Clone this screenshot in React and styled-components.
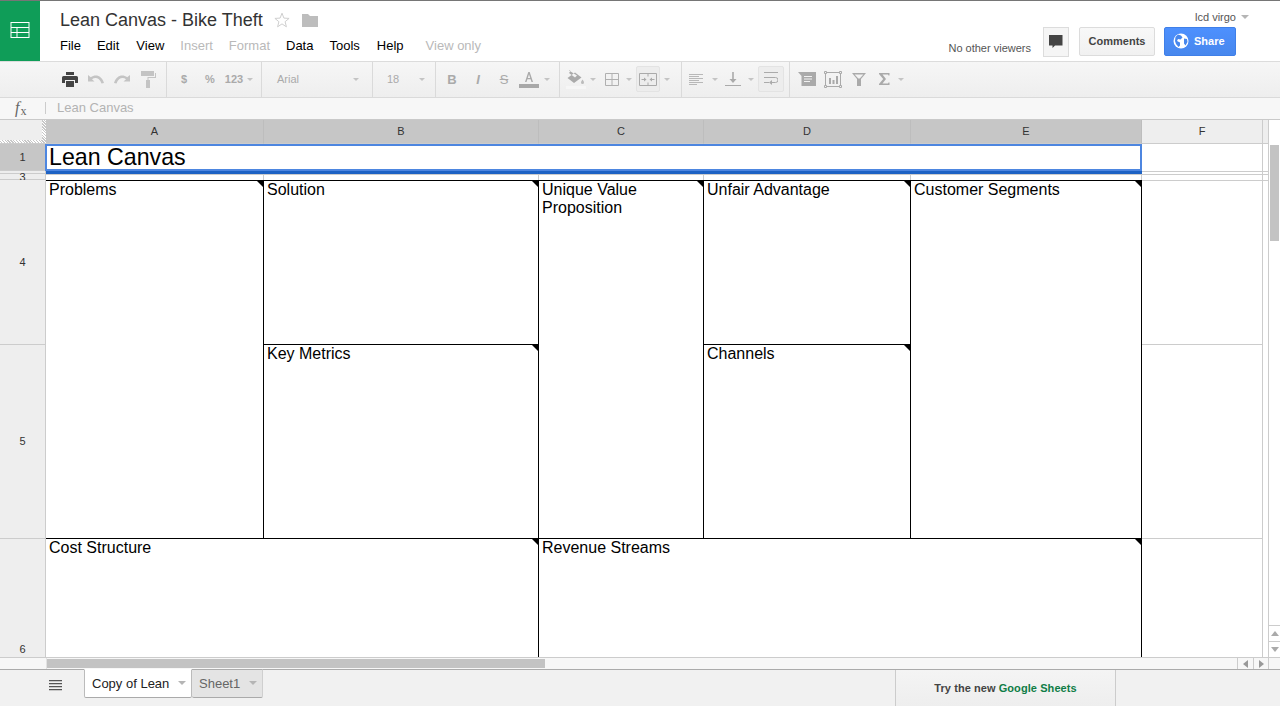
import React from "react";
import styled, { createGlobalStyle } from "styled-components";

const GlobalStyle = createGlobalStyle`
  html, body {
    margin: 0;
    padding: 0;
    height: 100%;
    overflow: hidden;
    background: #fff;
    font-family: "Liberation Sans", Arial, sans-serif;
  }
`;

const Page = styled.div`
  width: 1280px;
  height: 706px;
  display: flex;
  flex-direction: column;
  overflow: hidden;
  border-top: 1px solid #767676;
  box-sizing: border-box;
`;

/* ---------- header ---------- */
const Header = styled.header`
  height: 61px;
  flex: none;
  display: flex;
  border-bottom: 1px solid #dcdcdc;
  box-sizing: border-box;
`;
const LogoBox = styled.div`
  width: 40px;
  height: 60px;
  padding-bottom: 2px;
  box-sizing: border-box;
  background: #0f9d58;
  display: flex;
  align-items: center;
  justify-content: center;
`;
const TitleArea = styled.div`
  flex: 1;
  padding: 8px 0 0 20px;
`;
const TitleRow = styled.div`
  display: flex;
  align-items: center;
  height: 22px;
`;
const Title = styled.div`
  font-size: 18px;
  line-height: 22px;
  color: #333;
  margin-right: 11px;
`;
const FolderWrap = styled.span`
  display: flex;
  margin-left: 12px;
`;
const MenuBar = styled.nav`
  display: flex;
  gap: 16px;
  margin-top: 6px;
  font-size: 13px;
  line-height: 17px;
`;
const MenuItem = styled.span`
  color: ${(p) => (p.$off ? "#b9b9b9" : "#000")};
  margin-left: ${(p) => p.$push || 0}px;
`;
const RightArea = styled.div`
  width: 340px;
  padding: 9px 44px 0 0;
  box-sizing: border-box;
`;
const UserRow = styled.div`
  display: flex;
  align-items: center;
  justify-content: flex-end;
  gap: 5px;
  margin-right: -13px;
  font-size: 11px;
  line-height: 14px;
  color: #555;
`;
const SmallCaret = styled.span`
  width: 0;
  height: 0;
  border-left: ${(p) => p.$size || 4}px solid transparent;
  border-right: ${(p) => p.$size || 4}px solid transparent;
  border-top: ${(p) => p.$size || 4}px solid ${(p) => p.$color || "#b5b5b5"};
  flex: none;
`;
const ActionRow = styled.div`
  display: flex;
  align-items: flex-start;
  justify-content: flex-end;
  margin-top: 3px;
`;
const Viewers = styled.span`
  font-size: 11px;
  color: #555;
  margin: 15px 12px 0 0;
`;
const ChatButton = styled.button`
  width: 26px;
  height: 30px;
  padding: 0;
  margin-right: 10px;
  background: #f5f5f5;
  border: 1px solid #dcdcdc;
  display: flex;
  align-items: center;
  justify-content: center;
`;
const CommentsButton = styled.button`
  width: 76px;
  height: 29px;
  padding: 0 0 2px;
  margin-right: 9px;
  background: linear-gradient(#f8f8f8, #f1f1f1);
  border: 1px solid #dcdcdc;
  border-radius: 2px;
  font: bold 11px "Liberation Sans", Arial, sans-serif;
  color: #444;
`;
const ShareButton = styled.button`
  width: 72px;
  height: 29px;
  padding: 0 0 1px 8px;
  background: linear-gradient(#4d90fe, #4787ed);
  border: 1px solid #3f7fe8;
  border-radius: 2px;
  font: bold 11px "Liberation Sans", Arial, sans-serif;
  color: #fff;
  display: flex;
  align-items: center;
  gap: 5px;
`;

/* ---------- toolbar ---------- */
const Toolbar = styled.div`
  height: 36px;
  flex: none;
  display: flex;
  background: linear-gradient(#f6f6f6, #eeeeee);
  border-bottom: 1px solid #dadada;
  box-sizing: border-box;
`;
const ToolGroup = styled.div`
  width: ${(p) => p.$w}px;
  padding-left: ${(p) => p.$pad || 0}px;
  padding-bottom: 1px;
  flex: none;
  box-sizing: border-box;
  display: flex;
  align-items: center;
  border-right: ${(p) => (p.$last ? "none" : "1px solid #dadada")};
  font-size: 11px;
  color: #aaa;
`;
const Tool = styled.span`
  width: ${(p) => p.$w || 26}px;
  height: ${(p) => (p.$boxed ? 26 : 20)}px;
  margin-left: ${(p) => p.$ml || 0}px;
  flex: none;
  display: flex;
  align-items: center;
  justify-content: center;
  box-sizing: border-box;
  font-size: ${(p) => p.$size || 12}px;
  font-weight: ${(p) => (p.$bold ? "bold" : "normal")};
  font-style: ${(p) => (p.$italic ? "italic" : "normal")};
  background: ${(p) => (p.$boxed ? "#ededed" : "transparent")};
  border: ${(p) => (p.$boxed ? "1px solid #e3e3e3" : "none")};
  border-radius: 2px;
  color: #aaa;
`;
const ToolCaret = styled.span`
  width: ${(p) => p.$w || 12}px;
  flex: none;
  display: flex;
  justify-content: center;
`;
const FontName = styled.span`
  flex: 1;
  font-size: 11px;
  color: #aaa;
`;

/* ---------- formula bar ---------- */
const FormulaBar = styled.div`
  height: 22px;
  flex: none;
  display: flex;
  align-items: center;
  padding-bottom: 1px;
  background: #f7f7f7;
  border-bottom: 1px solid #c9c9c9;
  box-sizing: border-box;
`;
const FxLabel = styled.span`
  width: 45px;
  padding-left: 15px;
  box-sizing: border-box;
  font: italic 16px "Liberation Serif", serif;
  color: #666;
  sub {
    font-size: 12px;
    font-style: normal;
    margin-left: 1px;
    vertical-align: -2px;
    line-height: 0;
  }
`;
const FormulaValue = styled.span`
  border-left: 1px solid #ccc;
  padding-left: 11px;
  height: 12px;
  line-height: 12px;
  font-size: 13px;
  color: #b3b3b3;
`;

/* ---------- sheet ---------- */
const SheetArea = styled.div`
  height: 537px;
  flex: none;
  display: flex;
  overflow: hidden;
`;
const Grid = styled.div`
  width: 1269px;
  display: grid;
  grid-template-columns: 46px 218px 275px 165px 207px 231px 121px 6px;
  grid-template-rows: 24px 27px 3px 6px 165px 194px 220px;
  flex: none;
`;
const Corner = styled.div`
  grid-column: 1;
  grid-row: 1;
  background-color: #eeeeee;
  background-image: repeating-linear-gradient(45deg, #fff 0 1px, #c7c7c7 1px 2px);
  position: relative;
  border-bottom: 1px solid #ccc;
  box-sizing: border-box;
  &::before {
    content: "";
    position: absolute;
    left: 0;
    top: 0;
    right: 4px;
    bottom: 3px;
    background: #eeeeee;
  }
`;
const ColHead = styled.div`
  grid-row: 1;
  grid-column: ${(p) => p.$col};
  padding-bottom: 1px;
  background: ${(p) => (p.$on ? "#c6c6c6" : "#eeeeee")};
  border-right: 1px solid ${(p) => (p.$on ? "#bdbdbd" : "#cccccc")};
  border-bottom: 1px solid #cccccc;
  box-sizing: border-box;
  display: flex;
  align-items: center;
  justify-content: center;
  font-size: 11px;
  color: #333;
`;
const RowHead = styled.div`
  grid-column: 1;
  grid-row: ${(p) => p.$row};
  padding-bottom: ${(p) => p.$nudge || 0}px;
  background: ${(p) => (p.$on ? "#c6c6c6" : "#eeeeee")};
  border-right: 1px solid #cccccc;
  border-bottom: 1px solid #cccccc;
  box-sizing: border-box;
  display: flex;
  align-items: center;
  justify-content: center;
  font-size: 11px;
  line-height: 6px;
  color: #333;
`;
const Gutter = styled.div`
  grid-column: 8;
  grid-row: ${(p) => p.$row};
  background: ${(p) => (p.$head ? "#eeeeee" : "#fff")};
  border-right: 1px solid #cccccc;
  border-top: ${(p) => (p.$top ? "1px solid #cccccc" : "none")};
  border-bottom: ${(p) => (p.$head ? "1px solid #cccccc" : "none")};
  box-sizing: border-box;
`;
const TitleCell = styled.div`
  grid-column: 2 / 7;
  grid-row: 2;
  margin-left: -1px;
  border: 2px solid #4d86e0;
  box-sizing: border-box;
  padding-left: 2px;
  font-size: 23.2px;
  line-height: 22px;
  color: #000;
  background: #fff;
  z-index: 1;
`;
const SelectionEdge = styled.div`
  grid-column: 2 / 7;
  grid-row: 3;
  background: #1d62c4;
`;
const ThinCell = styled.div`
  grid-column: ${(p) => p.$col};
  grid-row: ${(p) => p.$row};
  border-right: 1px solid #cccccc;
  border-top: ${(p) => (p.$top ? "1px solid #cccccc" : "none")};
  border-bottom: ${(p) => (p.$bottom ? "1px solid #cccccc" : "none")};
  box-sizing: border-box;
`;
const BoxCell = styled.div`
  grid-column: ${(p) => p.$col};
  grid-row: ${(p) => p.$row};
  position: relative;
  border-right: 1px solid #000;
  border-bottom: 1px solid #000;
  border-top: ${(p) => (p.$top ? "1px solid #000" : "none")};
  box-sizing: border-box;
  padding: 0 3px;
  font-size: 16px;
  line-height: 18px;
  color: #000;
  background: #fff;
  &::after {
    content: "";
    position: absolute;
    top: 0;
    right: 0;
    border-top: 6px solid #000;
    border-left: 6px solid transparent;
  }
`;
const CellText = styled.div`
  max-width: ${(p) => (p.$narrow ? "150px" : "none")};
`;

/* ---------- scrollbars ---------- */
const VScroll = styled.div`
  width: 11px;
  flex: none;
  display: flex;
  flex-direction: column;
  background: #fff;
`;
const VTrack = styled.div`
  flex: 1;
  padding: 25px 1px 0 1px;
`;
const VThumb = styled.div`
  width: 9px;
  height: 96px;
  background: #c3c3c3;
`;
const ArrowBtn = styled.div`
  height: 16px;
  border-top: 1px solid #cccccc;
  display: flex;
  align-items: center;
  justify-content: center;
  box-sizing: border-box;
`;
const HScroll = styled.div`
  height: 12px;
  flex: none;
  display: flex;
  background: #f7f7f7;
  border-top: 1px solid #cccccc;
  box-sizing: border-box;
`;
const HCorner = styled.div`
  width: 47px;
  flex: none;
  border-right: 1px solid #e2e2e2;
  box-sizing: border-box;
`;
const HTrack = styled.div`
  width: 1190px;
  flex: none;
  padding-top: 1px;
`;
const HThumb = styled.div`
  width: 498px;
  height: 9px;
  background: #c3c3c3;
`;
const HArrow = styled.div`
  width: ${(p) => p.$w}px;
  flex: none;
  display: flex;
  align-items: center;
  justify-content: center;
  border-left: 1px solid #cccccc;
  box-sizing: border-box;
`;

/* ---------- tab bar ---------- */
const TabBar = styled.div`
  height: 37px;
  flex: none;
  display: flex;
  align-items: flex-start;
  background: #f1f1f1;
  border-top: 1px solid #ababab;
  box-sizing: border-box;
`;
const TabMenu = styled.div`
  width: 84px;
  height: 30px;
  flex: none;
  display: flex;
  align-items: center;
  justify-content: center;
  padding-left: 27px;
  box-sizing: border-box;
`;
const Tab = styled.div`
  width: ${(p) => p.$w}px;
  height: 29px;
  flex: none;
  display: flex;
  align-items: center;
  justify-content: space-between;
  padding: 0 5px 1px 7px;
  margin-top: -1px;
  box-sizing: border-box;
  background: ${(p) => (p.$on ? "#fff" : "#e4e4e4")};
  border: 1px solid ${(p) => (p.$on ? "#bbb" : "#cfcfcf")};
  border-top-color: ${(p) => (p.$on ? "#fff" : "#ababab")};
  border-bottom-color: #aaa;
  border-left: ${(p) => (p.$on ? "1px solid #bbb" : "none")};
  border-radius: 0 0 2px 2px;
  font-size: 13px;
  color: ${(p) => (p.$on ? "#222" : "#666")};
`;
const Promo = styled.div`
  margin-left: 632px;
  width: 221px;
  height: 36px;
  flex: none;
  display: flex;
  align-items: center;
  justify-content: center;
  background: linear-gradient(#f4f4f4, #eeeeee);
  border-left: 1px solid #cccccc;
  border-right: 1px solid #cccccc;
  box-sizing: border-box;
  font-size: 11px;
  font-weight: bold;
  letter-spacing: 0.08px;
  color: #444;
  b {
    color: #0f7d46;
    margin-left: 3px;
  }
`;

/* ---------- icons ---------- */
const SheetsLogo = () => (
  <svg width="20" height="16" viewBox="0 0 20 16" fill="none" stroke="#fff" strokeWidth="1">
    <rect x="1" y="0.5" width="18" height="15" />
    <path d="M1 5.500h18M1 10.500h18M7 5.500v10" />
  </svg>
);
const StarIcon = () => (
  <svg width="16" height="16" viewBox="0 0 16 16" fill="none" stroke="#cfcfcf">
    <path d="M8 1.2l1.9 4.9 5.2.3-4 3.3 1.3 5.1L8 11.9l-4.4 2.9 1.3-5.1-4-3.3 5.2-.3z" />
  </svg>
);
const FolderIcon = () => (
  <svg width="16" height="14" viewBox="0 0 16 14" fill="#bdbdbd">
    <path d="M0 1h6l2 2h8v11H0z" />
  </svg>
);
const ChatIcon = () => (
  <svg width="14" height="14" viewBox="0 0 14 14" fill="#444">
    <path d="M0 0h13.5v10.5H6L3.5 13v-2.5H0z" />
  </svg>
);
const GlobeIcon = () => (
  <svg width="16" height="16" viewBox="0 0 16 16">
    <circle cx="8" cy="8" r="7.5" fill="#fff" />
    <path d="M5 1.5l3 1 1.5 2-2 2-2.500-.5-1 2 3 1.500v3l-1.500 1.500-2.500-3-1-3 .5-4zM11 5.500l3 .5.5 3-2 3.500-1.500-2z" fill="#4787ed" />
  </svg>
);
const PrintIcon = () => (
  <svg width="16" height="15" viewBox="0 0 16 15" fill="#444">
    <path d="M4 0h8v3H4zM1.500 4h13A1.500 1.500 0 0 1 16 5.500V11h-3V8H3v3H0V5.500A1.500 1.500 0 0 1 1.500 4zM4 9h8v6H4z" />
  </svg>
);
const UndoIcon = ({ flip }) => (
  <svg width="16" height="10" viewBox="0 0 16 10" fill="#c4c4c4" style={flip ? { transform: "scaleX(-1)" } : undefined}>
    <path d="M0 1v6.500h6.500L4 5.200C7 3 11.500 3.500 13.500 9.500L16 9C14 1.500 7.500-.5 2.800 3.200z" />
  </svg>
);
const RollerIcon = () => (
  <svg width="15" height="17" viewBox="0 0 15 17" fill="#c4c4c4">
    <path d="M0 0h13v5H0zM14 2h1v5H7.500v2H9v8H5V9h1.500V6H14z" />
  </svg>
);
const TextUnderA = () => (
  <svg width="22" height="18" viewBox="0 0 22 18">
    <path d="M7 12L10.300 2h1.400L15 12h-1.500l-.9-2.800H9.400L8.500 12zM9.800 8h2.400L11 4.200z" fill="#aaa" />
    <rect x="1" y="14" width="20" height="4" fill="#a8a8a8" />
  </svg>
);
const FillIcon = () => (
  <svg width="20" height="19" viewBox="0 0 20 19">
    <path d="M3 0l1.500 1L3 3l6 4.500 2-2-8-5zM9 2.500l6.500 5L8 13 1.500 8z" fill="#aaa" />
    <path d="M16.500 9.500c1 1.500 1.500 2.200 1.500 3a1.500 1.500 0 0 1-3 0c0-.8.500-1.500 1.500-3z" fill="#bbb" />
    <rect x="0" y="16" width="20" height="3" fill="#f6f6f6" />
  </svg>
);
const BordersIcon = () => (
  <svg width="14" height="13" viewBox="0 0 14 13" fill="none" stroke="#b0b0b0">
    <path d="M.5.500h13v12H.5zM7 .500v12M.5 6.500h13" />
  </svg>
);
const MergeIcon = () => (
  <svg width="18" height="13" viewBox="0 0 18 13" fill="none" stroke="#aaa">
    <path d="M.5.500h17v12H.5zM9 .500v3M9 9.500v3" />
    <path d="M2.500 6.500h4M15.500 6.500h-4" />
    <path d="M5 4.500l2.500 2-2.500 2zM13 4.500l-2.500 2 2.500 2z" fill="#aaa" stroke="none" />
  </svg>
);
const AlignIcon = () => (
  <svg width="14" height="11" viewBox="0 0 14 11" stroke="#b8b8b8">
    <path d="M0 .500h14M0 2.500h10M0 4.500h14M0 6.500h10M0 8.500h14M0 10.500h8" />
  </svg>
);
const ValignIcon = () => (
  <svg width="16" height="14" viewBox="0 0 16 14">
    <path d="M7.200 0h1.600v7h2.700L8 11 4.500 7h2.700z" fill="#aaa" />
    <path d="M0 13.500h16" stroke="#aaa" />
  </svg>
);
const WrapIcon = () => (
  <svg width="14" height="15" viewBox="0 0 14 15" fill="none" stroke="#aaa">
    <path d="M0 .500h14M0 10.500h5" />
    <path d="M0 5.500h11.500a2.500 2.500 0 0 1 0 5H6.500" />
    <path d="M8 8l-3 2.500L8 13z" fill="#aaa" stroke="none" />
  </svg>
);
const CommentIcon = () => (
  <svg width="18" height="14" viewBox="0 0 18 14" fill="#aaa">
    <path d="M0 0h18v14H3.500V4z" />
    <path d="M6 4h8v1H6zM6 6.500h8v1H6zM6 9h6v1H6z" fill="#f1f1f1" />
  </svg>
);
const ChartIcon = () => (
  <svg width="18" height="17" viewBox="0 0 18 17" fill="none" stroke="#aaa">
    <path d="M1.500 1.500h15v14h-15z" />
    <path d="M.5.500h2v2h-2zM15.500.500h2v2h-2zM.5 14.500h2v2h-2zM15.500 14.500h2v2h-2z" fill="#f1f1f1" />
    <path d="M5 7h2v6H5zM8.500 9h2v4h-2zM12 5h2v8h-2z" fill="#aaa" stroke="none" />
  </svg>
);
const FilterIcon = () => (
  <svg width="14" height="13" viewBox="0 0 14 13">
    <path d="M0 0h14L9 6v7H5V6zM2.600 1.500L6.300 5.500h1.400l3.700-4z" fill="#aaa" fillRule="evenodd" />
  </svg>
);
const SigmaIcon = () => (
  <svg width="11" height="12" viewBox="0 0 11 12" fill="#aaa">
    <path d="M0 0h10.500v2.500H9.500L9 1.500H3.500L7 6l-3.500 4.500H9l.5-1h1V12H0v-1l4.200-5L0 1z" />
  </svg>
);
const ListIcon = () => (
  <svg width="13" height="11" viewBox="0 0 13 11" stroke="#555" strokeWidth="1.300">
    <path d="M0 .700h13M0 3.700h13M0 6.700h13M0 9.700h13" />
  </svg>
);
const Arrow = ({ d, color = "#888" }) => {
  const paths = { up: "M0 6l4-5 4 5z", down: "M0 1h8l-4 5z", left: "M6 0v8L1 4z", right: "M2 0v8l5-4z" };
  return (
    <svg width="8" height="8" viewBox="0 0 8 8" fill={color}>
      <path d={paths[d]} />
    </svg>
  );
};

/* ---------- data ---------- */
const columns = [
  { name: "A", col: 2, on: true },
  { name: "B", col: 3, on: true },
  { name: "C", col: 4, on: true },
  { name: "D", col: 5, on: true },
  { name: "E", col: 6, on: true },
  { name: "F", col: 7 },
];
const rowLabels = [
  { row: 2, label: "1", on: true },
  { row: 3, label: "" },
  { row: 4, label: "3" },
  { row: 5, label: "4" },
  { row: 6, label: "5", nudge: 2 },
  { row: 7, label: "6" },
];
const boxes = [
  { text: "Problems", col: "2", row: "5 / 7", top: true },
  { text: "Solution", col: "3", row: "5", top: true },
  { text: "Key Metrics", col: "3", row: "6" },
  { text: "Unique Value Proposition", col: "4", row: "5 / 7", top: true, narrow: true },
  { text: "Unfair Advantage", col: "5", row: "5", top: true },
  { text: "Channels", col: "5", row: "6" },
  { text: "Customer Segments", col: "6", row: "5 / 7", top: true },
  { text: "Cost Structure", col: "2 / 4", row: "7" },
  { text: "Revenue Streams", col: "4 / 7", row: "7" },
];
const menus = [
  { name: "File" },
  { name: "Edit" },
  { name: "View", push: 1 },
  { name: "Insert", off: true },
  { name: "Format", off: true },
  { name: "Data" },
  { name: "Tools" },
  { name: "Help", push: 1 },
  { name: "View only", off: true, push: 6 },
];

const Caret = ({ w }) => (
  <ToolCaret $w={w}>
    <SmallCaret $size={3} $color="#c4c4c4" />
  </ToolCaret>
);

const App = () => (
  <Page>
    <GlobalStyle />
    <Header>
      <LogoBox>
        <SheetsLogo />
      </LogoBox>
      <TitleArea>
        <TitleRow>
          <Title>Lean Canvas - Bike Theft</Title>
          <StarIcon />
          <FolderWrap>
            <FolderIcon />
          </FolderWrap>
        </TitleRow>
        <MenuBar>
          {menus.map((m) => (
            <MenuItem key={m.name} $off={m.off} $push={m.push}>
              {m.name}
            </MenuItem>
          ))}
        </MenuBar>
      </TitleArea>
      <RightArea>
        <UserRow>
          lcd virgo
          <SmallCaret />
        </UserRow>
        <ActionRow>
          <Viewers>No other viewers</Viewers>
          <ChatButton aria-label="Chat">
            <ChatIcon />
          </ChatButton>
          <CommentsButton>Comments</CommentsButton>
          <ShareButton>
            <GlobeIcon />
            Share
          </ShareButton>
        </ActionRow>
      </RightArea>
    </Header>

    <Toolbar>
      <ToolGroup $w={167} $pad={57}>
        <Tool><PrintIcon /></Tool>
        <Tool><UndoIcon /></Tool>
        <Tool><UndoIcon flip /></Tool>
        <Tool><RollerIcon /></Tool>
      </ToolGroup>
      <ToolGroup $w={95} $pad={4}>
        <Tool $size={11} $bold>$</Tool>
        <Tool $size={11} $bold>%</Tool>
        <Tool $w={22} $size={11} $bold>123</Tool>
        <Caret w={10} />
      </ToolGroup>
      <ToolGroup $w={111} $pad={15}>
        <FontName>Arial</FontName>
        <Caret w={32} />
      </ToolGroup>
      <ToolGroup $w={63} $pad={14}>
        <FontName>18</FontName>
        <Caret w={26} />
      </ToolGroup>
      <ToolGroup $w={124} $pad={3}>
        <Tool $size={13} $bold>B</Tool>
        <Tool $size={13} $bold $italic>I</Tool>
        <Tool $size={13}><s>S</s></Tool>
        <Tool $w={24}><TextUnderA /></Tool>
        <Caret w={12} />
      </ToolGroup>
      <ToolGroup $w={122} $pad={4}>
        <Tool $w={24}><FillIcon /></Tool>
        <Caret w={10} />
        <Tool $w={28}><BordersIcon /></Tool>
        <Caret w={6} />
        <Tool $w={24} $ml={4} $boxed><MergeIcon /></Tool>
        <Caret w={14} />
      </ToolGroup>
      <ToolGroup $w={108} $pad={2}>
        <Tool $w={24}><AlignIcon /></Tool>
        <Caret w={14} />
        <Tool $w={22}><ValignIcon /></Tool>
        <Caret w={14} />
        <Tool $w={26} $boxed><WrapIcon /></Tool>
      </ToolGroup>
      <ToolGroup $w={150} $pad={4} $last>
        <Tool><CommentIcon /></Tool>
        <Tool><ChartIcon /></Tool>
        <Tool><FilterIcon /></Tool>
        <Tool $w={24}><SigmaIcon /></Tool>
        <Caret w={10} />
      </ToolGroup>
    </Toolbar>

    <FormulaBar>
      <FxLabel>f<sub>x</sub></FxLabel>
      <FormulaValue>Lean Canvas</FormulaValue>
    </FormulaBar>

    <SheetArea>
      <Grid>
        <Corner />
        {columns.map((c) => (
          <ColHead key={c.name} $col={c.col} $on={c.on}>
            {c.name}
          </ColHead>
        ))}
        <Gutter $row={1} $head />
        {rowLabels.map((r) => (
          <RowHead key={r.row} $row={r.row} $on={r.on} $nudge={r.nudge}>
            {r.label}
          </RowHead>
        ))}
        <TitleCell>Lean Canvas</TitleCell>
        <SelectionEdge />
        {[2, 3, 4, 5, 6].map((c) => (
          <ThinCell key={c} $col={c} $row={4} $top />
        ))}
        <ThinCell $col={7} $row={2} />
        <ThinCell $col={7} $row={3} $top />
        <ThinCell $col={7} $row={4} $top />
        <ThinCell $col={7} $row={5} $top $bottom />
        <ThinCell $col={7} $row={6} $bottom />
        <ThinCell $col={7} $row={7} />
        <Gutter $row={2} />
        <Gutter $row={3} $top />
        <Gutter $row={4} $top />
        <Gutter $row="5 / 8" $top />
        {boxes.map((b) => (
          <BoxCell key={b.text} $col={b.col} $row={b.row} $top={b.top}>
            <CellText $narrow={b.narrow}>{b.text}</CellText>
          </BoxCell>
        ))}
      </Grid>
      <VScroll>
        <VTrack>
          <VThumb />
        </VTrack>
        <ArrowBtn><Arrow d="up" color="#aaa" /></ArrowBtn>
        <ArrowBtn><Arrow d="down" color="#aaa" /></ArrowBtn>
      </VScroll>
    </SheetArea>

    <HScroll>
      <HCorner />
      <HTrack>
        <HThumb />
      </HTrack>
      <HArrow $w={16}><Arrow d="left" color="#999" /></HArrow>
      <HArrow $w={15}><Arrow d="right" color="#999" /></HArrow>
      <HArrow $w={12} />
    </HScroll>

    <TabBar>
      <TabMenu>
        <ListIcon />
      </TabMenu>
      <Tab $w={108} $on>
        Copy of Lean
        <SmallCaret />
      </Tab>
      <Tab $w={71}>
        Sheet1
        <SmallCaret />
      </Tab>
      <Promo>
        Try the new <b>Google Sheets</b>
      </Promo>
    </TabBar>
  </Page>
);

export default App;
